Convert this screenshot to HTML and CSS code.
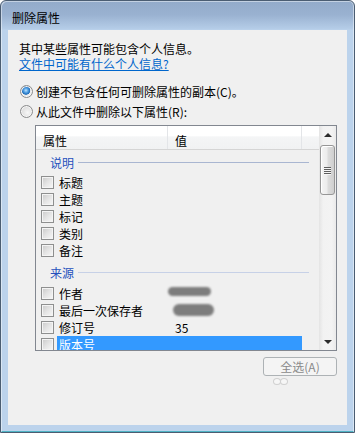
FILE: index.html
```html
<!DOCTYPE html>
<html lang="zh-CN">
<head>
<meta charset="utf-8">
<title>删除属性</title>
<link rel="stylesheet" href="styles.css">
</head>
<body>
<div class="window">
  <div class="titlebar"><span class="title">删除属性</span></div>
  <div class="client">
    <p class="intro">其中某些属性可能包含个人信息。</p>
    <a class="link" href="#">文件中可能有什么个人信息?</a>
    <div class="options">
      <div class="radio-row"><span class="radio checked"></span><span>创建不包含任何可删除属性的副本(C)。</span></div>
      <div class="radio-row"><span class="radio"></span><span>从此文件中删除以下属性(R):</span></div>
    </div>
    <div class="listview">
      <div class="lv-main">
        <div class="lv-header">
          <div class="hcol hcol-name">属性</div>
          <div class="hcol hcol-value">值</div>
          <div class="hcol hcol-fill"></div>
        </div>
        <div class="lv-body">
          <div class="group"><span class="group-label">说明</span><span class="group-line"></span></div>
          <div class="item"><span class="check"></span><span class="cell"><span class="name">标题</span><span class="value"></span></span></div>
          <div class="item"><span class="check"></span><span class="cell"><span class="name">主题</span><span class="value"></span></span></div>
          <div class="item"><span class="check"></span><span class="cell"><span class="name">标记</span><span class="value"></span></span></div>
          <div class="item"><span class="check"></span><span class="cell"><span class="name">类别</span><span class="value"></span></span></div>
          <div class="item"><span class="check"></span><span class="cell"><span class="name">备注</span><span class="value"></span></span></div>
          <div class="group group-later"><span class="group-label">来源</span><span class="group-line light"></span></div>
          <div class="item"><span class="check"></span><span class="cell"><span class="name">作者</span><span class="value"><span class="blob blob-a"></span></span></span></div>
          <div class="item"><span class="check"></span><span class="cell"><span class="name">最后一次保存者</span><span class="value"><span class="blob blob-b"></span></span></span></div>
          <div class="item"><span class="check"></span><span class="cell"><span class="name">修订号</span><span class="value">35</span></span></div>
          <div class="item"><span class="check"></span><span class="cell selected"><span class="name">版本号</span><span class="value"></span></span></div>
        </div>
      </div>
      <div class="scrollbar">
        <div class="sb-btn"><span class="arrow-up"></span></div>
        <div class="sb-track">
          <div class="sb-thumb"><span class="grip"></span><span class="grip"></span><span class="grip"></span><span class="grip"></span></div>
        </div>
        <div class="sb-btn"><span class="arrow-down"></span></div>
      </div>
    </div>
    <div class="actions"><button class="btn" type="button" disabled>全选(A)</button></div>
    <div class="cursor-dots"><span class="dot"></span><span class="dot"></span></div>
  </div>
</div>
</body>
</html>
```
FILE: styles.css
```css
* { box-sizing: border-box; }
html, body { margin: 0; padding: 0; }
body {
  width: 355px;
  height: 433px;
  background: #ffffff;
  font-family: "Noto Sans CJK SC", "Noto Sans", sans-serif;
  font-size: 12px;
  color: #000;
  overflow: hidden;
}
.window {
  width: 355px;
  height: 433px;
  border: 1px solid #4b5d72;
  border-radius: 6px 6px 0 0;
  background: linear-gradient(to bottom, #93abca 0px, #9ab2d1 14px, #b5cde8 28px, #bcd3ec 29px, #bcd3ec 100%);
  box-shadow: inset 1px 1px 0 rgba(255,255,255,0.45), inset -1px 0 0 rgba(255,255,255,0.45), inset 0 -1px 0 #4fb3c4;
  padding: 0 7px 7px 7px;
  display: flex;
  flex-direction: column;
}
.titlebar {
  height: 29px;
  padding: 10px 0 0 4px;
  flex: none;
}
.title { line-height: 14px; display: block; }
.client {
  flex: 1;
  background: #f0f0f0;
  padding: 11px 0 0 11px;
  display: flex;
  flex-direction: column;
}
.intro { margin: 0; line-height: 15px; }
.link {
  display: block;
  align-self: flex-start;
  line-height: 15px;
  color: #0066cc;
  text-decoration: underline;
}
.options { margin-top: 10px; }
.radio-row {
  height: 20px;
  display: flex;
  align-items: center;
  gap: 2px;
  margin-left: 1px;
}
.radio {
  width: 13px;
  height: 13px;
  border-radius: 50%;
  border: 1px solid #8b8c8d;
  background: radial-gradient(circle at 60% 60%, #f7f7f7 0%, #e1e1e1 55%, #cfcfcf 100%);
  box-shadow: inset 0 0 0 1px #f6f6f6;
  flex: none;
  margin-right: 1px;
}
.radio.checked {
  background:
    radial-gradient(circle at 45% 40%, #bfe3ff 0px, #5aa6e6 2px, #1f6dbb 4px, rgba(0,0,0,0) 4.6px),
    radial-gradient(circle at 60% 60%, #f7f7f7 0%, #e1e1e1 55%, #cfcfcf 100%);
}
.listview {
  margin-top: 4px;
  margin-left: 16px;
  width: 302px;
  height: 226px;
  border: 1px solid #828790;
  display: flex;
  background: #f0f0f0;
}
.lv-main {
  flex: 1;
  display: flex;
  flex-direction: column;
  min-width: 0;
}
.lv-header {
  height: 24px;
  display: flex;
  border-bottom: 1px solid #d5d5d5;
  background: linear-gradient(to bottom, #ffffff 0%, #ffffff 45%, #f4f5f6 46%, #f1f2f3 100%);
  flex: none;
}
.hcol {
  height: 23px;
  padding: 7px 0 0 7px;
  line-height: 15px;
  border-right: 1px solid #e3e5e8;
}
.hcol-name { width: 132px; }
.hcol-value { width: 134px; }
.hcol-fill { flex: 1; border-right: none; }
.lv-body {
  flex: 1;
  overflow: hidden;
}
.group {
  height: 24px;
  display: flex;
  align-items: center;
  padding-left: 14px;
}
.group-later { height: 26px; }
.group-label {
  color: #2550bd;
  line-height: 15px;
}
.group-line {
  flex: 1;
  height: 1px;
  background: #a9b6d1;
  margin: 0 10px 0 4px;
}
.group-line.light { background: #c7d1e7; }
.item {
  height: 17px;
  display: flex;
  align-items: center;
  padding-left: 5px;
}
.check {
  width: 13px;
  height: 13px;
  flex: none;
  border: 1px solid #8e8f8f;
  background: linear-gradient(135deg, #c9c9c9 0%, #e4e4e4 50%, #f8f8f8 100%);
  box-shadow: inset 0 0 0 1px #f4f4f4;
  margin-right: 3px;
}
.cell {
  width: 245px;
  height: 17px;
  display: flex;
  align-items: center;
  padding-left: 2px;
  line-height: 15px;
}
.cell.selected {
  background: #3399ff;
  color: #ffffff;
}
.name { width: 116px; flex: none; white-space: nowrap; }
.value { flex: 1; display: flex; align-items: center; }
.blob {
  display: inline-block;
  background: #7d7d7d;
  border-radius: 6px;
  filter: blur(0.8px);
}
.blob-a { width: 43px; height: 9px; margin-left: -7px; margin-top: -4px; }
.blob-b { width: 41px; height: 12px; margin-left: -2px; margin-top: -2px; }
.scrollbar {
  width: 17px;
  flex: none;
  display: flex;
  flex-direction: column;
  background: linear-gradient(to right, #e4e4e4 0%, #f2f2f2 25%, #f3f3f3 75%, #eaeaea 100%);
}
.sb-btn {
  height: 17px;
  flex: none;
  display: flex;
  align-items: center;
  justify-content: center;
}
.arrow-up {
  width: 0; height: 0;
  border-left: 4px solid transparent;
  border-right: 4px solid transparent;
  border-bottom: 4px solid #2b2b2b;
}
.arrow-down {
  width: 0; height: 0;
  border-left: 4px solid transparent;
  border-right: 4px solid transparent;
  border-top: 4px solid #2b2b2b;
}
.sb-track {
  flex: 1;
  padding: 2px 1px 0 1px;
}
.sb-thumb {
  height: 50px;
  border: 1px solid #969696;
  border-radius: 3px;
  background: linear-gradient(to right, #f4f4f4 0%, #ececec 45%, #dcdcdc 55%, #cfcfcf 100%);
  box-shadow: inset 1px 1px 0 #ffffff;
  display: flex;
  flex-direction: column;
  align-items: center;
  justify-content: center;
  gap: 1px;
}
.grip {
  width: 7px;
  height: 1px;
  background: #5e5e5e;
  box-shadow: 0 1px 0 #f6f6f6;
}
.actions {
  margin-top: 6px;
  padding-right: 10px;
  display: flex;
  justify-content: flex-end;
}
.btn {
  width: 74px;
  height: 19px;
  border: 1px solid #adb2b5;
  border-radius: 3px;
  background: #f4f4f4;
  color: #8a8a8a;
  font-family: inherit;
  font-size: 12px;
  line-height: 15px;
  padding: 0;
}
.cursor-dots {
  margin-top: 2px;
  padding-left: 254px;
  display: flex;
}
.dot {
  width: 8px;
  height: 7px;
  border: 1px solid #d0d0d0;
  border-radius: 50%;
  background: #f6f6f6;
  margin-right: -1px;
}
```
